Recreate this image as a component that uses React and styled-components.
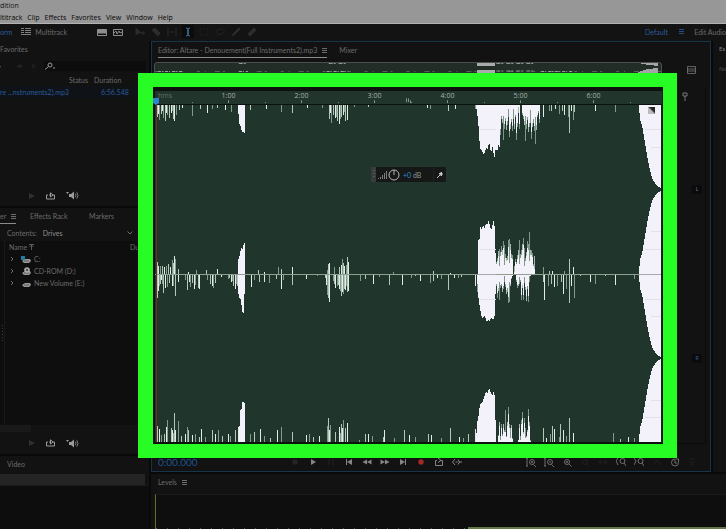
import React from "react";
import styled, { createGlobalStyle, css } from "styled-components";

const Global = createGlobalStyle`
  * { box-sizing: border-box; }
  html, body, #root { height: 100%; }
  body { margin: 0; background: #090909; overflow: hidden; }
  button, input, select { font: inherit; color: inherit; background: none; border: 0; padding: 0; margin: 0; }
  table { border-collapse: collapse; }
  svg { display: block; }
`;

const Shell = styled.div`
  height: 100vh;
  display: flex;
  flex-direction: column;
  font-family: Lato, "Open Sans", sans-serif;
  font-size: 7px;
  line-height: 12px;
  color: #6c6c6c;
  white-space: nowrap;
`;

const TitleBar = styled.header`
  height: 12px;
  background: #979797;
  color: #161616;
  font-family: "Open Sans", sans-serif;
  line-height: 11px;
`;

const MenuBar = styled.nav`
  height: 12px;
  display: flex;
  gap: 5px;
  background: #979797;
  border-bottom: 1px solid #b3b3b3;
  color: #050505;
  font-family: "Open Sans", sans-serif;
  font-weight: 500;
`;

const MenuButton = styled.button`
  line-height: 12px;
`;

const Toolbar = styled.div`
  height: 17px;
  flex: none;
  display: flex;
  align-items: center;
  padding-bottom: 2px;
  background: #131313;
  overflow: hidden;
`;

const ModeButton = styled.button`
  display: flex;
  align-items: center;
  gap: 4px;
  margin-right: ${(p) => p.$after}px;
  color: ${(p) => (p.$active ? "#2a5c9c" : "#6c6c6c")};
`;

const ToolGroup = styled.div`
  display: flex;
  align-items: center;
  gap: 4px;
  margin-right: ${(p) => p.$after || 0}px;
`;

const ToolButton = styled.button`
  display: grid;
  place-items: center;
  width: 12px;
  height: 13px;
  color: ${(p) => (p.$active ? "#477aa5" : p.$dim ? "#2c2c2c" : "#8d8d8d")};
  background: ${(p) => (p.$active ? "#0b0b0b" : "none")};
`;

const Workspaces = styled.div`
  display: flex;
  align-items: center;
  justify-content: space-between;
  margin-left: auto;
  width: 81px;
`;

const Workspace = styled.button`
  color: ${(p) => (p.$active ? "#2a5c9c" : "#6c6c6c")};
`;

const Main = styled.main`
  flex: 1;
  min-height: 0;
  display: grid;
  grid-template-columns: 149px minmax(0, 1fr);
  gap: 2px;
`;

const Column = styled.div`
  display: flex;
  flex-direction: column;
  min-height: 0;
  min-width: 0;
  gap: 2px;
`;

const Panel = styled.section`
  position: relative;
  display: flex;
  flex-direction: column;
  min-width: 0;
  overflow: hidden;
  background: #121212;
  flex: ${(p) => (p.$height ? `0 0 ${p.$height}px` : "1")};
`;

const TabRow = styled.div`
  display: flex;
  align-items: center;
  height: 17px;
  flex: none;
  gap: ${(p) => p.$gap || 14}px;
  padding-left: ${(p) => p.$inset || 0}px;
`;

const Tab = styled.button`
  display: flex;
  align-items: center;
  gap: 5px;
  height: 14px;
  border-bottom: 1px solid ${(p) => (p.$active ? "#8b8b8b" : "transparent")};
`;

const PanelTabs = styled.div`
  display: grid;
  grid-template-columns: 30px 59px 1fr;
  align-items: center;
  justify-items: start;
  height: 17px;
`;

const FilesBar = styled.div`
  display: flex;
  align-items: center;
  gap: 9px;
  height: 16px;
  color: #303030;
`;

const Search = styled.label`
  display: flex;
  flex: 1;
  align-items: center;
  gap: 2px;
  height: 10px;
  margin-right: 3px;
  background: #0c0c0c;
  color: #9a9a9a;
`;

const SearchInput = styled.input`
  flex: 1;
  min-width: 0;
  outline: none;
`;

const FileTable = styled.table`
  width: 100%;
  table-layout: fixed;
  th, td { padding: 0; height: 12px; text-align: left; font-weight: 400; }
  td { background: #0f1318; color: #285a99; }
  td:last-child { padding-left: 7px; }
`;

const Preview = styled.div`
  display: flex;
  align-items: center;
  gap: 11px;
  margin-top: auto;
  padding-left: 29px;
  height: ${(p) => p.$height}px;
  color: #9b9b9b;
`;

const PlainButton = styled.button`
  display: grid;
  place-items: center;
  color: ${(p) => (p.$dim ? "#303030" : "inherit")};
`;

const ContentsRow = styled.label`
  display: flex;
  align-items: center;
  gap: 6px;
  height: 16px;
  padding: 0 16px 0 7px;
  svg { margin-left: auto; }
`;

const DriveSelect = styled.select`
  appearance: none;
  color: #8f8f8f;
  line-height: 12px;
`;

const TreeWrap = styled.div`
  display: grid;
  grid-template-columns: 5px minmax(0, 1fr);
  gap: 4px;
  flex: 1;
  min-height: 0;
  background: #0e0e0e;
`;

const Gutter = styled.div`
  display: grid;
  align-items: center;
  border-right: 1px solid #191919;
  color: #3c3c3c;
`;

const TreeTable = styled.table`
  width: 100%;
  height: fit-content;
  table-layout: fixed;
  th, td { padding: 0; height: 12px; font-weight: 400; text-align: left; }
  th:first-child { width: 121px; }
`;

const TreeCell = styled.div`
  display: flex;
  align-items: center;
  gap: ${(p) => (p.$header ? 2 : 3)}px;
`;

const Chevron = styled.button`
  width: 9px;
  padding-left: 1px;
`;

const ScrollStrip = styled.div`
  height: 7px;
  width: 31px;
  background: #191919;
`;

const SelectedBar = styled.div`
  height: 11px;
  margin: 1px 4px 0 0;
  background: #242424;
`;

const Well = styled.div`
  flex: 1;
  background: #0d0d0d;
  border-top: 1px solid #1a1a1a;
`;

const EditorRow = styled.div`
  flex: 1;
  min-height: 0;
  display: grid;
  grid-template-columns: minmax(0, 1fr) 13px;
  gap: 2px;
`;

const Editor = styled.section`
  position: relative;
  min-height: 0;
  display: flex;
  flex-direction: column;
  background: #121212;
  border: 1px solid #16344a;
`;

const Highlight = styled.div`
  position: absolute;
  top: 31px;
  left: -14px;
  right: 33px;
  bottom: 13px;
  border: 14px solid #27fd25;
  border-left-width: 15px;
  pointer-events: none;
`;

const Split = styled.div`
  display: grid;
  grid-template-columns: minmax(0, 1fr) 48px;
  ${(p) =>
    p.$grow
      ? css`flex: 1; min-height: 0;`
      : css`height: 28px; flex: none;`}
`;

const Overview = styled.div`
  margin: 3px 0 0 2px;
  border: 1px solid #4a4e4c;
  border-radius: 3px 3px 0 0;
  background: #222d28;
  svg { width: 100%; height: 22px; }
`;

const ScaleTop = styled.div`
  padding: 7px 0 0 25px;
  color: #767676;
`;

const Timeline = styled.div`
  display: flex;
  flex-direction: column;
  min-height: 0;
  padding: 4px 0 2px 3px;
  background: #0d120f;
`;

const Ruler = styled.div`
  position: relative;
  flex: none;
  height: 14px;
  background: #21352c;
  border-bottom: 1px solid #0b120e;
  color: #a8b3ab;
  font-family: "Open Sans", sans-serif;
  font-size: 7px;
  line-height: 10px;
`;

const RulerLabels = styled.div`
  display: grid;
  grid-template-columns: 37fr repeat(6, 73fr) 32fr;
  text-align: center;
  span:first-child { color: #5e7065; text-align: left; padding-left: 3px; }
`;

const RulerMarks = styled.svg`
  position: absolute;
  inset: 0;
  width: 100%;
  height: 100%;
`;

const Playhead = styled.svg`
  position: absolute;
  left: -3px;
  bottom: -2px;
`;

const WaveArea = styled.div`
  position: relative;
  flex: 1;
  min-height: 0;
  background: #20352b;
`;

const WaveSvg = styled.svg`
  position: absolute;
  inset: 0;
  width: 100%;
  height: 100%;
`;

const CornerButton = styled.button`
  position: absolute;
  top: 2px;
  right: 7px;
`;

const Hud = styled.div`
  position: absolute;
  top: 62px;
  left: 216px;
  display: flex;
  align-items: center;
  width: 75px;
  height: 15px;
  background: #151817;
  color: #989898;
`;

const HudGrip = styled.span`
  display: grid;
  place-items: center;
  width: 5px;
  height: 15px;
  margin-right: 2px;
  background: #383c3a;
`;

const Gain = styled.output`
  margin-left: 3px;
  color: #8f9492;
  b { font-weight: 400; color: #3c86cf; }
`;

const Pin = styled.button`
  margin-left: auto;
  padding: 3px;
  border-left: 1px solid #222;
  color: #c6c6c6;
`;

const Scale = styled.div`
  display: grid;
  grid-template-rows: 18px 1fr 1fr;
  justify-items: end;
  align-items: center;
  margin-right: 4px;
  border-right: 1px solid #0b0b0b;
  border-bottom: 1px solid #080808;
`;

const ScalePin = styled.div`
  justify-self: start;
  padding-left: 20px;
  color: #777;
`;

const Channel = styled.button`
  width: 10px;
  height: 9px;
  margin-right: 3px;
  background: #0b0b0d;
  font-size: 5px;
  line-height: 9px;
  color: ${(p) => p.$color};
`;

const Controls = styled.div`
  display: flex;
  align-items: center;
  flex: none;
  height: 27px;
  padding: 8px 8px 0 6px;
  color: #888;
`;

const Time = styled.time`
  flex: 0 0 128px;
  font-size: 10px;
  color: #1e5290;
`;

const ControlGroup = styled.div`
  display: flex;
  margin-left: ${(p) => (p.$end ? "auto" : "0")};
`;

const Control = styled.button`
  display: grid;
  place-items: center;
  width: 18px;
  height: 12px;
  color: ${(p) => (p.$dim ? "#242424" : p.$record ? "#a52b20" : "#858585")};
`;

const SideText = styled.div`
  padding: ${(p) => p.$top}px 0 0 6px;
  font-size: 6px;
  color: ${(p) => p.$color};
  font-style: ${(p) => (p.$italic ? "italic" : "normal")};
`;

const Meter = styled.div`
  flex: 1;
  margin: 3px 0 0 4px;
  background: #0e0e0e;
  border-top: 1px solid #1b1b1b;
  border-left: 1px solid #6c6c22;
  display: flex;
  align-items: flex-end;
`;

const MeterTicks = styled.div`
  flex: 312;
  height: 1px;
  background: repeating-linear-gradient(90deg, #555 0 1px, transparent 1px 11px);
`;

const MeterFill = styled.div`
  flex: 258;
  height: 2px;
  background: #617947;
`;

const S = ({ w = 10, h = 10, children, ...rest }) => (
  <svg width={w} height={h} viewBox={`0 0 ${w} ${h}`} fill="none" stroke="currentColor" strokeWidth="1" aria-hidden="true" {...rest}>
    {children}
  </svg>
);

const MenuLines = ({ color }) => (
  <S w={5} h={5} stroke={color || "currentColor"}><path d="M0 .5h5M0 2.5h5M0 4.5h5" /></S>
);

const LoopIcon = () => (
  <S w={9} h={8}><path d="M2 3H.5v4h8V3H6.5M3 3h2M4.5.8 7 3 4.5 5z" /></S>
);

const SpeakerIcon = () => (
  <S w={13} h={9}>
    <path d="M0 1h3L1.5 3z" fill="currentColor" stroke="none" />
    <path d="M3 3h2l3-2.5v8L5 6H3z" fill="currentColor" stroke="none" />
    <path d="M9.3 2.8q1.2 1.7 0 3.4M10.8 1.3q2.4 3.2 0 6.4" strokeWidth="0.8" />
  </S>
);

const PlayIcon = () => (
  <S w={6} h={8}><path d="M0 1v6l6-3z" fill="currentColor" stroke="none" /></S>
);

const ToolArt = {
  waveform: <path d="M.5 2.5h9v6h-9zM1 6l2-2 1 3 2-3 1 2 2-1" />,
  spectral: <><path d="M.5 2.5h9v6h-9z" /><path d="M1 3h8v3H1z" fill="currentColor" /></>,
  move: <path d="M1 1v7l2-2 3 0zM6 6h4M8 4v4" fill="currentColor" />,
  razor: <path d="m1 3 3-2 5 5-2 3z" fill="currentColor" />,
  slip: <path d="M1 1v8M9 1v8M3 5h4" />,
  cursor: <path d="M3 1q2 0 2 1.5v5Q5 9 3 9M7 1Q5 1 5 2.5v5Q5 9 7 9" />,
  marquee: <path d="M1 2h8v6H1z" strokeDasharray="2 1" strokeWidth="0.5" />,
  lasso: <path d="M2 6Q0 2 5 2t4 3-6 2L2 9" strokeWidth="0.6" />,
  brush: <path d="m1 9 2-3 5-5 1 1-5 5z" fill="currentColor" />,
  heal: <path d="m1 7 6-6 2 2-6 6z" fill="currentColor" />,
};

const ControlArt = {
  Stop: <path d="M3 3h4v4H3z" fill="currentColor" />,
  Play: <path d="M3 2v6l5-3z" fill="currentColor" stroke="none" />,
  Pause: <path d="M3 2v6M7 2v6" />,
  "Skip to start": <><path d="M2.5 2v6" /><path d="M8 2v6L3 5z" fill="currentColor" stroke="none" /></>,
  Rewind: <path d="M5 2.5v5L.5 5zM9.5 2.5v5L5 5z" fill="currentColor" stroke="none" />,
  "Fast forward": <path d="M.5 2.5v5L5 5zM5 2.5v5L9.5 5z" fill="currentColor" stroke="none" />,
  "Skip to end": <><path d="M7.5 2v6" /><path d="M2 2v6l5-3z" fill="currentColor" stroke="none" /></>,
  Record: <circle cx="5" cy="5" r="2.7" fill="currentColor" stroke="none" />,
  Loop: <path d="M3 3.5H1.500v5h7v-5H7M4 1l3 2.500-3 2" />,
  "Skip selection": <path d="M3 2 .5 5 3 8M3.500 5h2M6 2.500 7.500 5 6 7.500M7 5h3" />,
  "Zoom in amplitude": <path d="M1 1v8M0 1h2M0 9h2M7.500 7.500 10 10M3.500 5a2.500 2.500 0 1 1 5 0 2.500 2.500 0 1 1-5 0M5 5h2M6 4v2" />,
  "Zoom out amplitude": <path d="M1 1v8M0 1h2M0 9h2M7.500 7.500 10 10M3.500 5a2.500 2.500 0 1 1 5 0 2.500 2.500 0 1 1-5 0M5 5h2" />,
  "Zoom in time": <path d="M7 7l2.500 2.500M2.500 5a2.500 2.500 0 1 1 5 0 2.500 2.500 0 1 1-5 0M4 5h2M5 4v2" />,
  "Zoom out time": <path d="M7 7l2.500 2.500M2.500 5a2.500 2.500 0 1 1 5 0 2.500 2.500 0 1 1-5 0" />,
  "Zoom out full": <path d="M1 5h8M3 3 1 5l2 2M7 3l2 2-2 2" />,
  "Zoom in point": <path d="M2 1 0 4l2 4M8 6l2 3M4 4a2.500 2.500 0 1 1 5 0 2.500 2.500 0 1 1-5 0" />,
  "Zoom out point": <path d="m0 1 2 3-2 4M8 6l2 3M4 4a2.500 2.500 0 1 1 5 0 2.500 2.500 0 1 1-5 0" />,
  "Zoom selection": <path d="M1 8 5 3l4 5" />,
  "Reset zoom": <path d="M5 2a3.500 3.500 0 1 0 3.500 3.500V2H5.500M5 3v3h2" />,
  "Zoom track": <path d="M1 2h6M2 4l5 5M7 4 2 9" />,
};

const transport = ["Stop", "Play", "Pause", "Skip to start", "Rewind", "Fast forward", "Skip to end", "Record", "Loop", "Skip selection"];
const zooms = ["Zoom in amplitude", "Zoom out amplitude", "Zoom in time", "Zoom out time", "Zoom out full", "Zoom in point", "Zoom out point", "Zoom selection", "Reset zoom", "Zoom track"];
const dimmed = new Set(["Stop", "Pause", "Zoom out time", "Zoom out full", "Zoom selection", "Zoom track"]);

/* Peak heights, as [x, height], measured from each base line of the wave. */
const topPeaks = [[2,12],[3,9],[4,15],[6,9],[7,6],[8,13],[10,16],[11,8],[12,10],[14,13],[16,8],[17,6],[18,14],[19,16],[21,10],[24,5],[27,3],[37,11],[45,4],[52,8],[57,4],[62,3],[70,5],[76,7],[95,5],[111,4],[126,7],[137,8],[152,3],[167,3],[174,14],[175,8],[176,18],[178,10],[180,13],[181,12],[182,16],[184,19],[185,14],[186,12],[188,10],[189,7],[190,16],[192,15],[199,2],[213,2],[272,3],[275,4],[293,6],[300,4],[320,4],[322,8],[388,12],[394,6],[396,6],[400,4],[404,9],[407,6],[409,10],[413,12],[414,28],[416,6],[418,15],[419,7],[440,6],[460,7]];
const upPeaks = [[2,12],[3,8],[5,8],[7,8],[9,7],[11,8],[13,10],[15,7],[17,14],[18,11],[19,18],[20,15],[23,5],[33,2],[41,4],[51,4],[62,5],[83,1],[103,4],[109,2],[123,7],[126,5],[137,7],[172,4],[173,10],[174,11],[179,7],[184,7],[186,9],[187,15],[188,11],[189,8],[191,9],[192,17],[193,12],[238,2],[278,3],[295,1],[388,7],[394,3],[397,3],[409,3],[414,15],[418,7]];
const downPeaks = [[2,24],[3,17],[4,12],[5,10],[6,6],[7,10],[8,19],[10,14],[12,13],[14,9],[17,12],[18,12],[20,22],[23,8],[30,6],[32,16],[34,8],[35,13],[37,9],[39,15],[40,11],[43,14],[44,15],[52,6],[55,10],[57,12],[58,14],[60,9],[66,3],[73,5],[74,4],[76,8],[77,7],[78,12],[80,15],[81,10],[82,12],[96,13],[99,6],[104,8],[109,8],[114,9],[121,5],[126,15],[128,6],[137,11],[151,5],[162,2],[170,4],[171,11],[172,21],[173,24],[174,28],[178,7],[179,10],[180,14],[182,12],[183,11],[184,15],[185,17],[186,22],[187,18],[188,20],[189,15],[190,16],[191,12],[192,18],[193,17],[205,7],[210,5],[218,10],[224,3],[234,11],[247,11],[256,4],[260,2],[265,7],[275,9],[278,7],[282,4],[286,5],[293,16],[299,4],[303,4],[306,3],[320,12],[322,18],[388,8],[389,26],[393,12],[396,10],[399,13],[402,12],[406,8],[408,20],[411,15],[414,29],[416,12],[419,24],[425,2],[435,8],[440,10],[450,2],[460,11],[479,5]];
const bottomPeaks = [[2,16],[4,13],[6,7],[9,8],[11,15],[12,22],[16,14],[17,12],[18,9],[19,29],[20,12],[23,21],[26,6],[30,8],[32,15],[33,12],[37,7],[40,8],[44,5],[46,13],[50,5],[57,12],[60,8],[63,12],[67,6],[73,8],[75,6],[80,12],[83,15],[95,8],[99,10],[105,13],[109,6],[115,4],[122,12],[126,15],[137,10],[151,7],[154,8],[158,5],[164,6],[172,16],[173,24],[174,12],[175,17],[180,10],[184,15],[185,9],[186,18],[187,14],[188,22],[190,14],[192,19],[204,2],[210,8],[213,8],[217,6],[228,5],[229,12],[239,4],[249,12],[254,7],[260,5],[273,8],[276,7],[286,4],[295,14],[304,5],[308,4],[313,8],[320,13],[322,9],[388,14],[391,4],[395,8],[397,16],[399,13],[404,5],[405,18],[408,12],[411,6],[414,24],[418,9],[458,9],[465,3],[473,5],[479,4]];

/* Filled bursts follow the same scheme, a run of outline points each. */
const topRuns = [
  [[83,0],[84,18],[86,22],[87,28],[88,26],[90,29],[90,0]],
  [[321,0],[323,14],[325,43],[327,46],[329,50],[331,43],[333,44],[334,36],[336,48],[338,40],[339,55],[341,42],[342,48],[344,38],[345,46],[345,0]],
];
const upRuns = [
  [[83,0],[83,13],[85,20],[86,26],[88,25],[89,32],[90,30],[90,0]],
  [[323,0],[323,33],[325,36],[325,48],[327,44],[328,49],[330,45],[331,52],[332,49],[334,54],[335,47],[337,44],[338,53],[339,52],[340,44],[341,0]],
];
const downRuns = [
  [[83,0],[83,15],[84,24],[86,25],[87,37],[89,40],[90,0]],
  [[322,0],[323,20],[325,34],[327,44],[330,42],[332,49],[333,45],[335,48],[336,43],[338,46],[340,41],[341,0]],
];
const bottomRuns = [
  [[84,0],[85,31],[87,34],[87,40],[90,39],[90,0]],
  [[321,0],[322,18],[324,29],[325,38],[328,41],[329,44],[331,51],[333,48],[334,55],[336,49],[338,46],[338,52],[340,46],[341,0]],
];
const fadeOut = [[484,0],[485,15],[487,20],[489,32],[491,44],[493,56],[495,65],[497,73],[500,78],[503,82],[507,83],[507,0]];

/* Consecutive column heights of the busy passage, starting at a given x. */
const topCols = [[345, [30,14,18,35,24,16,25,20,12,32,24,17,26,14,24,12,35,22,8,24]], [367, [10,14,20,36,24,15,27,22,18,34,22,18,26,39,25,12,8,18]]];
const upCols = [[341, [12,16,23,25,22,28,24,33,29,20,16,18,34,35,30,20,19,0,8,15,12,19,24,34,20,24,30,36,26,16,22,33,30,42,24,24,21,10,18]]];
const downCols = [[341, [12,24,17,26,14,12,18,15,8,13,20,18,29,28,12,5,2,0,0,0,8,14,12,10,8,26,14,26,9,16,27,15,28,8,2]]];
const bottomCols = [[342, [0,7,20,6,18,8,18,12,32,6,20,35,18,14,17,4,0,0,0,0,0,2,18,6,22,30,10,24,14,6,12,33,20,2]]];

const lanes = [
  { base: 0, dir: 1, peaks: topPeaks, runs: topRuns, cols: topCols },
  { base: 169, dir: -1, peaks: upPeaks, runs: upRuns, cols: upCols },
  { base: 169, dir: 1, peaks: downPeaks, runs: downRuns, cols: downCols },
  { base: 337, dir: -1, peaks: bottomPeaks, runs: bottomRuns, cols: bottomCols },
];

const Bursts = ({ base, dir, peaks, runs, cols }) => (
  <g>
    {peaks.map(([x, h], i) => (
      <path
        key={`${x}-${i}`}
        d={`M${x + 0.5} ${base}v${dir * h}`}
        stroke={i % 3 === 1 ? "#e3ebe6" : i % 3 === 2 ? "#809c8c" : "#b4c7ba"}
      />
    ))}
    {cols.map(([start, heights]) =>
      heights.map((h, i) => (
        <g key={start + i}>
          <path d={`M${start + i + 0.5} ${base}v${dir * h}`} stroke={i % 4 === 2 ? "#a9b8b0" : "#7d9788"} />
          <path d={`M${start + i + 0.5} ${base}v${dir * Math.round(h * (i % 5 === 3 ? 0.3 : 0.8))}`} stroke="#f3f2fb" />
        </g>
      ))
    )}
    {[...runs, fadeOut].map((r, i) => (
      <path key={i} fill="#f3f2fb" stroke="none" d={`M${r.map(([x, h]) => `${x} ${base + dir * h}`).join("L")}Z`} />
    ))}
  </g>
);

const Waveform = () => (
  <WaveSvg viewBox="0 0 507 337" preserveAspectRatio="none" shapeRendering="crispEdges" role="img" aria-label="Stereo waveform">
    {lanes.map((l, i) => <Bursts key={i} {...l} />)}
    <path d="M490 24.500h17M496 42.500h11M325 24.500h16M490 144.500h17M325 144.500h16M496 126.500h11M490 194.500h17M325 194.500h16M496 211.500h11M490 312.500h17M496 295.500h11" stroke="#e2e1ea" />
    <path d="M0 169.500h507" stroke="#8e9e8f" />
    <path d="M323 169.500h18M485 169.500h22" stroke="#aaa8aa" />
    <path d="M1.500 0v337" stroke="#67302a" />
    <path d="M506.500 0v337" stroke="#17231c" />
  </WaveSvg>
);

const MiniWave = () => (
  <svg viewBox="0 0 507 22" preserveAspectRatio="none" shapeRendering="crispEdges" aria-hidden="true">
    <path d="M0 8.500h507" stroke="#56615a" strokeDasharray="3 5 1 9 5 3 2 14" />
    <path d="M3 8.500h24M84 8.500h9M172 8.500h22M387 8.500h32" stroke="#99a39c" strokeDasharray="3 1 1 2" />
    <path d="M323 1h18M323 8h18" stroke="#a9aaad" strokeWidth="3" />
    <path d="M84 .5h7M174 .5h18M342 .5h40M342 8h40" stroke="#8d9890" strokeWidth="1" strokeDasharray="4 1 2 3" />
    <path d="M484 0h20v3l-9-1zM484 12V9l10-3 10-1v7z" fill="#a4a4a8" />
  </svg>
);

const Preset = ({ height }) => (
  <Preview $height={height}>
    <PlainButton $dim aria-label="Play preview"><PlayIcon /></PlainButton>
    <PlainButton aria-label="Loop preview"><LoopIcon /></PlainButton>
    <PlainButton aria-label="Auto-play"><SpeakerIcon /></PlainButton>
  </Preview>
);

const DriveIcon = ({ kind }) => (
  <S w={10} h={9} stroke="none">
    <path d="M1 6 4 4h5l1 2-2 2H3z" fill="#999" />
    <path d="M3 6h5" stroke="#333" strokeWidth="0.6" />
    {kind === "system" && <path d="M0 1h4v4H0z" fill="#227ba0" />}
    {kind === "disc" && <><circle cx="6" cy="3" r="2.800" fill="#aaa" /><circle cx="6" cy="3" r="0.900" fill="#222" /></>}
  </S>
);

const drives = [
  { name: "C:", kind: "system" },
  { name: "CD-ROM (D:)", kind: "disc" },
  { name: "New Volume (E:)", kind: "plain" },
];

function FilesPanel() {
  return (
    <Panel $height={165}>
      <TabRow><Tab>Favorites</Tab></TabRow>
      <FilesBar>
        <S w={16} h={8}><path d="M0 5.500h2" stroke="#aaa" /></S>
        <S w={11} h={8}><path d="M2 7V3h2v4M6 7V1h2v6M0 5h11" /></S>
        <S w={7} h={8}><path d="M1 2h5v5H1zM3 1h2" /></S>
        <Search>
          <S w={11} h={8}><path d="M4.500 4.500 1 7.500M4 3a2 2 0 1 1 4 0 2 2 0 1 1-4 0M9 6h2" /></S>
          <SearchInput type="search" aria-label="Search files" />
        </Search>
      </FilesBar>
      <FileTable>
        <colgroup><col /><col width="25" /><col width="55" /></colgroup>
        <thead><tr><th aria-label="Name" /><th>Status</th><th>Duration</th></tr></thead>
        <tbody><tr><td colSpan="2">re ...nstruments2).mp3</td><td>6:56.548</td></tr></tbody>
      </FileTable>
      <Preset height={21} />
    </Panel>
  );
}

function BrowserPanel() {
  return (
    <Panel>
      <PanelTabs>
        <Tab $active>er <MenuLines /></Tab>
        <Tab>Effects Rack</Tab>
        <Tab>Markers</Tab>
      </PanelTabs>
      <ContentsRow>
        Contents:
        <DriveSelect defaultValue="Drives"><option>Drives</option></DriveSelect>
        <S w={6} h={4}><path d="m.5.5 2.500 2.500L5.500.5" /></S>
      </ContentsRow>
      <TreeWrap>
        <Gutter><S w={4} h={16}><path d="M2.500 0v16" strokeDasharray="1 2" /></S></Gutter>
        <TreeTable>
          <thead><tr><th><TreeCell $header>Name<S w={5} h={6}><path d="M0 .5h5M2.500 1v5M.5 3l2-2 2 2" strokeWidth="0.8" /></S></TreeCell></th><th>Du</th></tr></thead>
          <tbody>
            {drives.map((d) => (
              <tr key={d.name}>
                <td colSpan="2">
                  <TreeCell>
                    <Chevron aria-label={`Expand ${d.name}`}><S w={4} h={6}><path d="m1 1 2 2-2 2" /></S></Chevron>
                    <DriveIcon kind={d.kind} />
                    {d.name}
                  </TreeCell>
                </td>
              </tr>
            ))}
          </tbody>
        </TreeTable>
      </TreeWrap>
      <ScrollStrip />
      <Preset height={22} />
    </Panel>
  );
}

export default function App() {
  return (
    <>
      <Global />
      <Shell>
        <TitleBar>dition</TitleBar>
        <MenuBar>
          {["ltitrack", "Clip", "Effects", "Favorites", "View", "Window", "Help"].map((m) => <MenuButton key={m}>{m}</MenuButton>)}
        </MenuBar>
        <Toolbar>
          <ModeButton $active $after={9}>orm</ModeButton>
          <ModeButton $after={29}>
            <S w={10} h={7} stroke="none"><path d="M0 0h3v1H0zM4 0h6v1H4zM0 2h3v1H0zM4 2h6v1H4zM0 4h3v1H0zM4 4h6v1H4zM0 6h10v1H0z" fill="#808080" /></S>
            Multitrack
          </ModeButton>
          <ToolGroup $after={10}>
            <ToolButton aria-label="Spectral display"><S>{ToolArt.spectral}</S></ToolButton>
            <ToolButton aria-label="Waveform display"><S>{ToolArt.waveform}</S></ToolButton>
          </ToolGroup>
          <ToolGroup>
            {["move", "razor", "slip", "cursor", "marquee", "lasso", "brush", "heal"].map((t) => (
              <ToolButton key={t} aria-label={t} $dim $active={t === "cursor"}><S>{ToolArt[t]}</S></ToolButton>
            ))}
          </ToolGroup>
          <Workspaces>
            <Workspace $active>Default</Workspace>
            <MenuLines color="#244d80" />
            <Workspace>Edit Audio</Workspace>
          </Workspaces>
        </Toolbar>
        <Main>
          <Column>
            <FilesPanel />
            <BrowserPanel />
            <Panel $height={73}>
              <TabRow $inset={7}><Tab>Video</Tab></TabRow>
              <SelectedBar />
              <Well />
            </Panel>
          </Column>
          <Column>
            <EditorRow>
              <Editor>
                <TabRow $inset={6} $gap={12}>
                  <Tab $active>Editor: Altare - Denouement(Full Instruments2).mp3 <MenuLines /></Tab>
                  <Tab>Mixer</Tab>
                </TabRow>
                <Split>
                  <Overview><MiniWave /></Overview>
                  <ScaleTop><S w={9} h={8}><path d="M.5.5h8v7h-8zM0 3h9M0 5h9" strokeWidth="0.8" /></S></ScaleTop>
                </Split>
                <Split $grow>
                  <Timeline>
                    <Ruler>
                      <RulerLabels>
                        <span>hms</span>
                        {[1, 2, 3, 4, 5, 6].map((m) => <span key={m}>{m}:00</span>)}
                      </RulerLabels>
                      <RulerMarks viewBox="0 0 507 14" preserveAspectRatio="none" stroke="#879a8d" aria-hidden="true">
                        <path d="M73.500 10v3M146.500 10v3M219.500 10v3M292.500 10v3M365.500 10v3M438.500 10v3M37.500 12v1M110.500 12v1M183.500 12v1M256.500 12v1M329.500 12v1M402.500 12v1M475.500 12v1" />
                        <path d="M251.500 8v4M253.500 8v4M255.500 10v3" />
                      </RulerMarks>
                      <Playhead width="8" height="9" viewBox="0 0 8 9" aria-hidden="true"><path d="M1 1h6v5L4 8 1 6z" fill="#2f83cf" /></Playhead>
                    </Ruler>
                    <WaveArea>
                      <Waveform />
                      <CornerButton aria-label="Toggle channel view">
                        <S w={7} h={7} stroke="none"><path d="M0 0h7v7H0z" fill="#6d6d70" /><path d="M0 0v7h7z" fill="#bbb" /><path d="M1 0h6v6z" fill="#262626" /></S>
                      </CornerButton>
                      <Hud>
                        <HudGrip><S w={2} h={9} stroke="#777"><path d="M1 0v9" strokeDasharray="1 2" /></S></HudGrip>
                        <S w={10} h={9} stroke="#7b7e7d"><path d="M.5 8v1M2.500 7v2M4.500 5v4M6.500 3v6M8.500 1v8" /></S>
                        <S w={12} h={12} stroke="#b5b5b5"><circle cx="6" cy="6" r="5" /><path d="M6 1v5" /></S>
                        <Gain><b>+0</b> dB</Gain>
                        <Pin aria-label="Pin panel"><S w={6} h={7}><path d="M0 7 3 4M2 2l3 3M3 3l2-2" /><path d="m2 3 2-2 2 2-2 2z" fill="currentColor" stroke="none" /></S></Pin>
                      </Hud>
                    </WaveArea>
                  </Timeline>
                  <Scale>
                    <ScalePin><S w={6} h={9}><path d="M1 1h4v3H1zM3 4v5" /></S></ScalePin>
                    <Channel $color="#777">L</Channel>
                    <Channel $color="#345f91">R</Channel>
                  </Scale>
                </Split>
                <Controls>
                  <Time>0:00.000</Time>
                  <ControlGroup>
                    {transport.map((t) => <Control key={t} aria-label={t} $dim={dimmed.has(t)} $record={t === "Record"}><S>{ControlArt[t]}</S></Control>)}
                  </ControlGroup>
                  <ControlGroup $end>
                    {zooms.map((t) => <Control key={t} aria-label={t} $dim={dimmed.has(t)}><S strokeWidth="0.8">{ControlArt[t]}</S></Control>)}
                  </ControlGroup>
                </Controls>
                <Highlight />
              </Editor>
              <Panel>
                <SideText $top={2} $color="#858585">Es</SideText>
                <SideText $top={8} $color="#505050" $italic>No</SideText>
              </Panel>
            </EditorRow>
            <Panel $height={55}>
              <TabRow $inset={7}><Tab>Levels <MenuLines /></Tab></TabRow>
              <Meter><MeterTicks /><MeterFill /></Meter>
            </Panel>
          </Column>
        </Main>
      </Shell>
    </>
  );
}
